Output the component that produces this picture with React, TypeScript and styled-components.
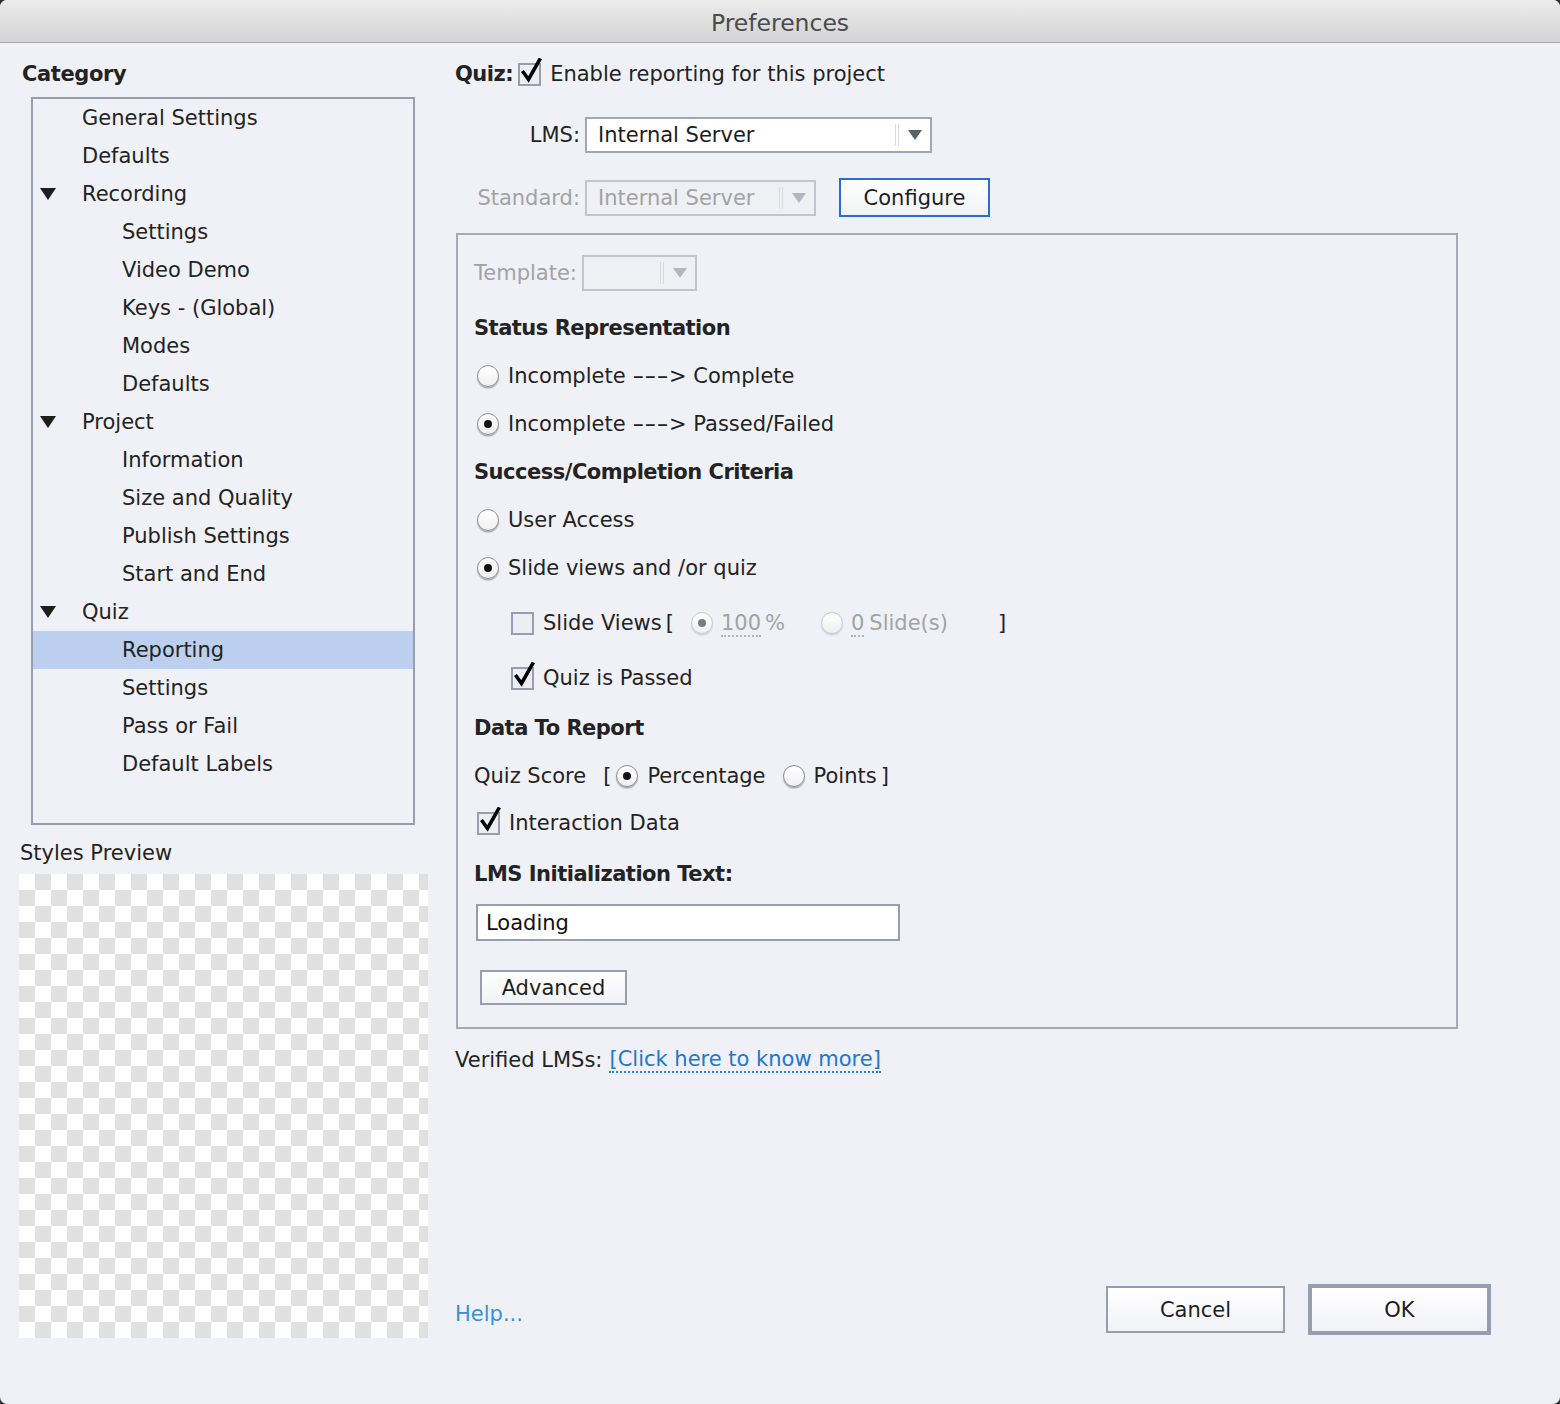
import React from 'react'
import styled, { createGlobalStyle } from 'styled-components'

const Global = createGlobalStyle`
  html, body {
    margin: 0;
    padding: 0;
    background: #2e2e30;
  }
  body {
    font-family: "DejaVu Sans", "Liberation Sans", sans-serif;
    font-size: 21px;
    color: #232323;
  }
`

const Window = styled.div`
  width: 1560px;
  height: 1404px;
  background: #f0f1f6;
  border-radius: 7px;
  overflow: hidden;
  display: flex;
  flex-direction: column;
`

const TitleBar = styled.div`
  height: 43px;
  flex: none;
  background: linear-gradient(#ececec, #d3d3d3);
  border-bottom: 1px solid #a9a9ab;
  display: flex;
  align-items: center;
  justify-content: center;
  color: #4b4b4b;
  font-size: 23.5px;
  padding-top: 3px;
  box-sizing: border-box;
`

const Body = styled.div`
  flex: 1;
  display: flex;
  min-height: 0;
`

const LeftCol = styled.div`
  width: 409px;
  margin-left: 19px;
  padding-top: 16px;
  display: flex;
  flex-direction: column;
`

const SectionTitle = styled.div`
  height: 30px;
  line-height: 30px;
  font-weight: bold;
  letter-spacing: -0.4px;
  margin-left: 3px;
`

const TreeBox = styled.div`
  margin: 8px 0 0 12px;
  width: 384px;
  height: 728px;
  box-sizing: border-box;
  border: 2px solid #9a9daf;
  display: flex;
  flex-direction: column;
`

const TreeRow = styled.div<{ $level: number; $selected?: boolean }>`
  height: 38px;
  flex: none;
  display: flex;
  align-items: center;
  padding-left: ${p => (p.$level === 2 ? 40 : 0)}px;
  background: ${p => (p.$selected ? '#bccfee' : 'transparent')};
`

const Twisty = styled.span`
  width: 49px;
  flex: none;
  display: flex;
  align-items: center;
  padding-left: 7px;
  box-sizing: border-box;
`

const PreviewLabel = styled.div`
  height: 30px;
  line-height: 30px;
  margin-top: 13px;
  margin-left: 1px;
`

const Checker = styled.div`
  margin-top: 6px;
  width: 409px;
  height: 464px;
  background: repeating-conic-gradient(#e0e0e0 0% 25%, #ffffff 0% 50%) 0 0 / 32px 32px;
`

const RightCol = styled.div`
  margin-left: 27px;
  width: 1036px;
  padding: 16px 0 69px;
  display: flex;
  flex-direction: column;
`

const Line = styled.div<{ $h?: number; $mt?: number; $indent?: number }>`
  height: ${p => p.$h ?? 48}px;
  margin-top: ${p => p.$mt ?? 0}px;
  padding-left: ${p => p.$indent ?? 0}px;
  flex: none;
  display: flex;
  align-items: center;
  white-space: nowrap;
`

const Bold = styled.span`
  font-weight: bold;
  letter-spacing: -0.5px;
`

const FieldLabel = styled.span<{ $disabled?: boolean }>`
  width: 125px;
  text-align: right;
  color: ${p => (p.$disabled ? '#a2a2a6' : '#232323')};
  margin-right: 5px;
  flex: none;
`

const Select = styled.div<{ $w: number; $disabled?: boolean }>`
  width: ${p => p.$w}px;
  height: 36px;
  box-sizing: border-box;
  border: 2px solid ${p => (p.$disabled ? '#c2c4ce' : '#a2a5b5')};
  background: ${p => (p.$disabled ? '#eef0f4' : '#ffffff')};
  color: ${p => (p.$disabled ? '#a2a2a6' : '#1c1c1c')};
  display: flex;
  align-items: center;
  padding: 0 8px 0 11px;
  flex: none;
`

const SelectText = styled.span`
  flex: 1;
`

const Sep = styled.span`
  width: 4px;
  height: 22px;
  border-left: 1px solid #dadbe0;
  border-right: 1px solid #dadbe0;
  margin-right: 9px;
  box-sizing: border-box;
`

const Arrow = styled.span<{ $disabled?: boolean }>`
  width: 0;
  height: 0;
  border-left: 7px solid transparent;
  border-right: 7px solid transparent;
  border-top: 10px solid ${p => (p.$disabled ? '#b4b6c0' : '#5e6068')};
`

const Button = styled.div<{ $w: number; $h: number; $border?: string; $bw?: number }>`
  width: ${p => p.$w}px;
  height: ${p => p.$h}px;
  box-sizing: border-box;
  border: ${p => p.$bw ?? 2}px solid ${p => p.$border ?? '#9a9daf'};
  background: linear-gradient(#ffffff, #f1f2f6);
  display: flex;
  align-items: center;
  justify-content: center;
  color: #1e1e1e;
  flex: none;
`

const Panel = styled.div`
  margin-top: 16px;
  margin-left: 1px;
  width: 1002px;
  box-sizing: border-box;
  border: 2px solid #a6a8b8;
  padding: 20px 0 22px 16px;
  display: flex;
  flex-direction: column;
`

const Gray = styled.span`
  color: #a2a2a6;
`

const Dotted = styled.span`
  color: #a2a2a6;
  border-bottom: 2px dotted #b0b0b6;
  line-height: 22px;
`

const Dashes = styled.span`
  display: inline-block;
  transform: scaleX(1.6);
  margin: 0 7px;
`

const Spacer = styled.span<{ $w: number }>`
  width: ${p => p.$w}px;
  flex: none;
`

const RadioCircle = styled.span<{ $disabled?: boolean }>`
  width: 22px;
  height: 22px;
  box-sizing: border-box;
  border-radius: 50%;
  border: 1px solid ${p => (p.$disabled ? '#c8c9ce' : '#8c8d93')};
  background: linear-gradient(#ffffff, #f0f0f2);
  box-shadow: 0 1.5px 1px ${p => (p.$disabled ? 'rgba(0,0,0,0.12)' : 'rgba(0,0,0,0.3)')};
  display: flex;
  align-items: center;
  justify-content: center;
  flex: none;
`

const Dot = styled.span<{ $disabled?: boolean }>`
  width: 8px;
  height: 8px;
  border-radius: 50%;
  background: ${p => (p.$disabled ? '#7a7a80' : '#141414')};
`

const BoxWrap = styled.span`
  position: relative;
  width: 23px;
  height: 23px;
  flex: none;
`

const Box = styled.span`
  display: block;
  width: 23px;
  height: 23px;
  box-sizing: border-box;
  border: 2px solid #9a9caf;
  background: #eceef3;
`

const Tick = styled.svg`
  position: absolute;
  left: 2px;
  top: -5px;
`

const Label = styled.span<{ $gap?: number }>`
  margin-left: ${p => p.$gap ?? 9}px;
`

const TextInput = styled.div`
  margin-top: 4px;
  margin-left: 2px;
  width: 424px;
  height: 37px;
  box-sizing: border-box;
  border: 2px solid #9a9daf;
  background: #ffffff;
  display: flex;
  align-items: center;
  padding-left: 8px;
  color: #111;
`

const LinkText = styled.span`
  color: #2277cf;
  border-bottom: 2px dotted #2a7fd4;
  line-height: 24px;
  margin-left: 7px;
`

const Footer = styled.div`
  margin-top: auto;
  height: 51px;
  display: flex;
  align-items: center;
`

const Help = styled.span`
  color: #3b8fd2;
  margin-top: 9px;
  flex: 1;
`

const Radio = ({ on, disabled }: { on?: boolean; disabled?: boolean }) => (
  <RadioCircle $disabled={disabled}>{on && <Dot $disabled={disabled} />}</RadioCircle>
)

const Check = ({ on }: { on?: boolean }) => (
  <BoxWrap>
    <Box />
    {on && (
      <Tick width="22" height="26" viewBox="0 0 22 26">
        <path d="M3.5 14.5 L8.5 21.5 L19.5 2" fill="none" stroke="#000" strokeWidth="3.6" strokeLinecap="square" />
      </Tick>
    )}
  </BoxWrap>
)

const Triangle = () => (
  <svg width="16" height="12" viewBox="0 0 16 12">
    <path d="M0 0 H16 L8 12 Z" fill="#1e1e1e" />
  </svg>
)

const tree: { label: string; level: number; open?: boolean; selected?: boolean }[] = [
  { label: 'General Settings', level: 1 },
  { label: 'Defaults', level: 1 },
  { label: 'Recording', level: 1, open: true },
  { label: 'Settings', level: 2 },
  { label: 'Video Demo', level: 2 },
  { label: 'Keys - (Global)', level: 2 },
  { label: 'Modes', level: 2 },
  { label: 'Defaults', level: 2 },
  { label: 'Project', level: 1, open: true },
  { label: 'Information', level: 2 },
  { label: 'Size and Quality', level: 2 },
  { label: 'Publish Settings', level: 2 },
  { label: 'Start and End', level: 2 },
  { label: 'Quiz', level: 1, open: true },
  { label: 'Reporting', level: 2, selected: true },
  { label: 'Settings', level: 2 },
  { label: 'Pass or Fail', level: 2 },
  { label: 'Default Labels', level: 2 },
]

const App = () => {
  return (
    <>
      <Global />
      <Window>
        <TitleBar>Preferences</TitleBar>
        <Body>
          <LeftCol>
            <SectionTitle>Category</SectionTitle>
            <TreeBox>
              {tree.map((item, i) => (
                <TreeRow key={i} $level={item.level} $selected={item.selected}>
                  {item.level === 1 && <Twisty>{item.open && <Triangle />}</Twisty>}
                  {item.level === 2 && <Twisty />}
                  <span>{item.label}</span>
                </TreeRow>
              ))}
            </TreeBox>
            <PreviewLabel>Styles Preview</PreviewLabel>
            <Checker />
          </LeftCol>

          <RightCol>
            <Line $h={30}>
              <Bold>Quiz:</Bold>
              <Spacer $w={5} />
              <Check on />
              <Label>Enable reporting for this project</Label>
            </Line>

            <Line $h={36} $mt={28}>
              <FieldLabel>LMS:</FieldLabel>
              <Select $w={347}>
                <SelectText>Internal Server</SelectText>
                <Sep />
                <Arrow />
              </Select>
            </Line>

            <Line $h={39} $mt={25}>
              <FieldLabel $disabled>Standard:</FieldLabel>
              <Select $w={231} $disabled>
                <SelectText>Internal Server</SelectText>
                <Sep />
                <Arrow $disabled />
              </Select>
              <Spacer $w={23} />
              <Button $w={151} $h={39} $border="#2d6bd3">Configure</Button>
            </Line>

            <Panel>
              <Line $h={36}>
                <Gray>Template:</Gray>
                <Spacer $w={5} />
                <Select $w={115} $disabled>
                  <SelectText />
                  <Sep />
                  <Arrow $disabled />
                </Select>
              </Line>

              <Line $mt={13}>
                <Bold>Status Representation</Bold>
              </Line>
              <Line $indent={3}>
                <Radio />
                <Label>Incomplete <Dashes>---</Dashes>&gt; Complete</Label>
              </Line>
              <Line $indent={3}>
                <Radio on />
                <Label>Incomplete <Dashes>---</Dashes>&gt; Passed/Failed</Label>
              </Line>
              <Line>
                <Bold>Success/Completion Criteria</Bold>
              </Line>
              <Line $indent={3}>
                <Radio />
                <Label>User Access</Label>
              </Line>
              <Line $indent={3}>
                <Radio on />
                <Label>Slide views and /or quiz</Label>
              </Line>

              <Line $h={62} $indent={37}>
                <Check />
                <Label>Slide Views</Label>
                <Label $gap={4}>[</Label>
                <Spacer $w={17} />
                <Radio on disabled />
                <Label $gap={8}>
                  <Dotted>100</Dotted>
                </Label>
                <Label $gap={4}>
                  <Gray>%</Gray>
                </Label>
                <Spacer $w={36} />
                <Radio disabled />
                <Label $gap={8}>
                  <Dotted>0</Dotted>
                </Label>
                <Label $gap={5}>
                  <Gray>Slide(s)</Gray>
                </Label>
                <Label $gap={50}>]</Label>
              </Line>

              <Line $indent={37}>
                <Check on />
                <Label>Quiz is Passed</Label>
              </Line>

              <Line $h={52}>
                <Bold>Data To Report</Bold>
              </Line>

              <Line $h={44}>
                <span>Quiz Score</span>
                <Label $gap={17}>[</Label>
                <Spacer $w={5} />
                <Radio on />
                <Label>Percentage</Label>
                <Spacer $w={17} />
                <Radio />
                <Label>Points</Label>
                <Label $gap={4}>]</Label>
              </Line>

              <Line $h={50} $indent={3}>
                <Check on />
                <Label>Interaction Data</Label>
              </Line>

              <Line $h={52}>
                <Bold>LMS Initialization Text:</Bold>
              </Line>

              <TextInput>Loading</TextInput>

              <Line $h={35} $mt={29} $indent={6}>
                <Button $w={147} $h={35}>Advanced</Button>
              </Line>
            </Panel>

            <Line $h={30} $mt={16}>
              <span>Verified LMSs:</span>
              <LinkText>[Click here to know more]</LinkText>
            </Line>

            <Footer>
              <Help>Help...</Help>
              <Button $w={179} $h={47}>Cancel</Button>
              <Spacer $w={23} />
              <Button $w={183} $h={51} $bw={4}>OK</Button>
            </Footer>
          </RightCol>
        </Body>
      </Window>
    </>
  )
}

export default App
